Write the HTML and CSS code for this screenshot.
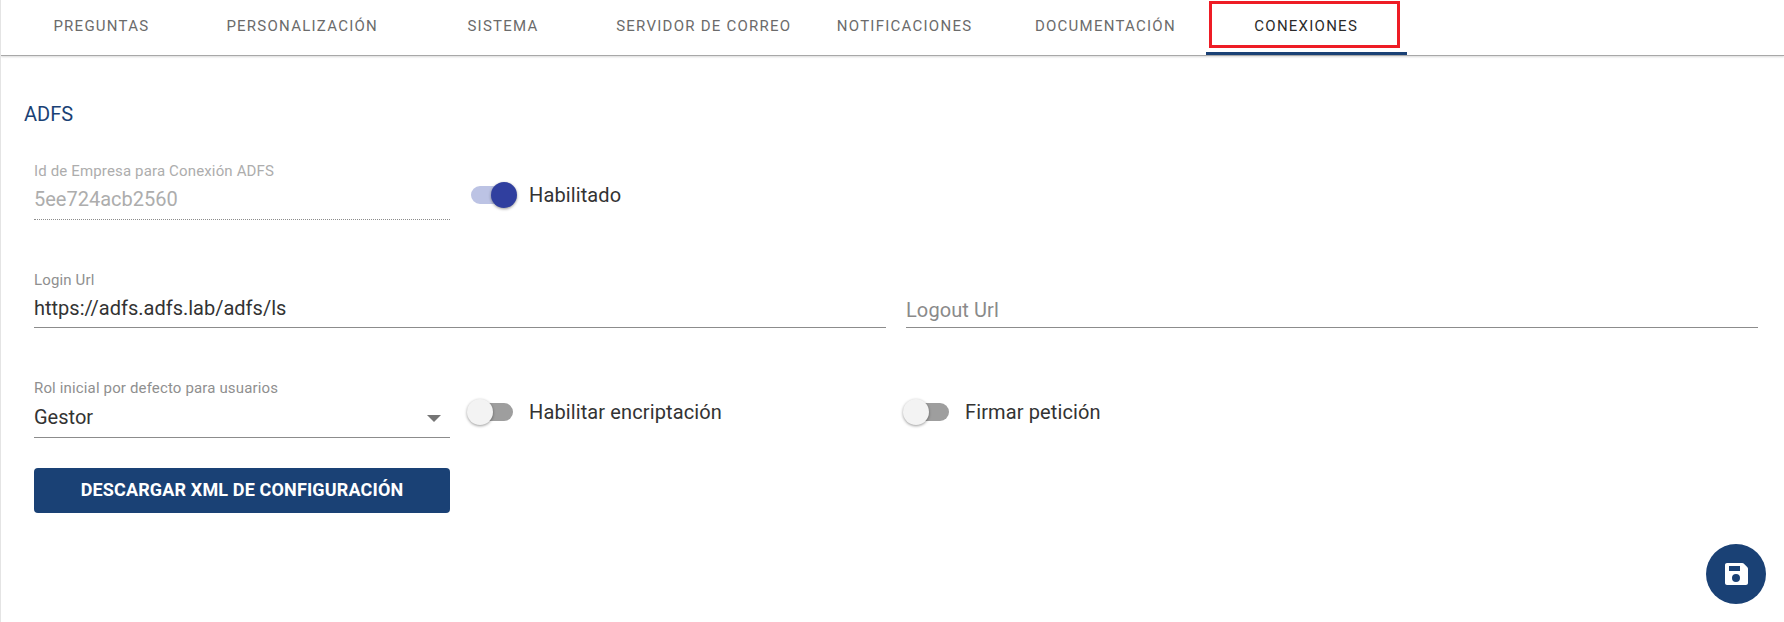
FILE: index.html
```html
<!DOCTYPE html>
<html lang="es">
<head>
    <meta charset="UTF-8">
    <title>Conexiones</title>
    <link rel="stylesheet" href="styles.css">
</head>
<body>
    <nav class="tabs">
        <div class="tab">Preguntas</div>
        <div class="tab">Personalización</div>
        <div class="tab">Sistema</div>
        <div class="tab">Servidor de correo</div>
        <div class="tab">Notificaciones</div>
        <div class="tab">Documentación</div>
        <div class="tab active">Conexiones<span class="mark"></span></div>
    </nav>
    <main class="content">
        <h2 class="title">ADFS</h2>

        <div class="row row-first">
            <div class="field small disabled">
                <label>Id de Empresa para Conexión ADFS</label>
                <div class="value">5ee724acb2560</div>
            </div>
            <div class="switch on"><span class="track"><span class="knob"></span></span>Habilitado</div>
        </div>

        <div class="row row-urls">
            <div class="field wide">
                <label>Login Url</label>
                <div class="value">https://adfs.adfs.lab/adfs/ls</div>
            </div>
            <div class="field wide empty">
                <label></label>
                <div class="value">Logout Url</div>
            </div>
        </div>

        <div class="row row-rol">
            <div class="field small select">
                <label>Rol inicial por defecto para usuarios</label>
                <div class="value">Gestor<span class="arrow"></span></div>
            </div>
            <div class="switch enc"><span class="track"><span class="knob"></span></span>Habilitar encriptación</div>
            <div class="switch"><span class="track"><span class="knob"></span></span>Firmar petición</div>
        </div>

        <button class="btn">Descargar XML de configuración</button>
    </main>
    <button class="fab" aria-label="Guardar">
        <svg width="24" height="24" viewBox="0 0 24 24"><path fill="#fff" fill-rule="evenodd" d="M3 1h15.200c.6 0 1.100.2 1.500.6l3.700 3.700c.4.4.6.9.6 1.500V21c0 1.100-.9 2-2 2H3c-1.100 0-2-.9-2-2V3c0-1.100.9-2 2-2zm2 3v5h11V4H5zm7 8a4 4 0 1 0 0 8 4 4 0 0 0 0-8z"/></svg>
    </button>
</body>
</html>
```

FILE: styles.css
```css
*{
    margin: 0;
    padding: 0;
    box-sizing: border-box;
}
html,body{
    height: 100%;
}
body{
    position: relative;
    overflow: hidden;
    background-color: #ffffff;
    border-left: 1px solid #e4e4e4;
    font-family: Roboto, "Liberation Sans", sans-serif;
    color: #333333;
}
.tabs{
    display: flex;
    height: 56px;
    border-bottom: 1px solid #a8a8a8;
    box-shadow: 0 1px 2px rgba(0,0,0,0.15);
}
.tab{
    position: relative;
    width: 200.8px;
    height: 55px;
    padding-bottom: 4px;
    display: flex;
    align-items: center;
    justify-content: center;
    font-size: 15px;
    font-weight: 400;
    letter-spacing: 1.25px;
    text-transform: uppercase;
    color: #6b6b6b;
}
.tab.active{
    color: #2b2b2b;
    border-bottom: 3px solid #1a4175;
    padding-bottom: 1px;
}
.mark{
    position: absolute;
    left: 3px;
    right: 7px;
    top: 1px;
    height: 47px;
    border: 3px solid #ee1c25;
}
.content{
    padding: 45px 26px 0 33px;
}
.title{
    margin-left: -10px;
    font-size: 20px;
    line-height: 26px;
    font-weight: 400;
    color: #1a4175;
}
.row{
    display: flex;
    gap: 20px;
}
.row-first{
    margin-top: 34px;
}
.row-urls{
    margin-top: 50px;
}
.row-rol{
    margin-top: 50px;
}
.field{
    flex: none;
    height: 59px;
    border-bottom: 1px solid #8c8c8c;
}
.field.small{
    width: 416px;
}
.field.wide{
    width: 852px;
    height: 58px;
}
.select.field{
    height: 60px;
}
.field label{
    display: block;
    height: 20px;
    font-size: 15px;
    letter-spacing: 0.15px;
    line-height: 20px;
    color: #8f8f8f;
}
.value{
    position: relative;
    margin-top: 3px;
    font-size: 20px;
    line-height: 30px;
    color: #333333;
}
.empty .value{
    margin-top: 5px;
    letter-spacing: 0.1px;
    color: #8a8a8a;
}
.select .value{
    margin-top: 4px;
}
.disabled{
    border-bottom: 1px dotted #8c8c8c;
}
.disabled label,.disabled .value{
    color: #adadad;
}
.arrow{
    position: absolute;
    right: 9px;
    top: 13px;
    border-left: 7px solid transparent;
    border-right: 7px solid transparent;
    border-top: 7px solid #757575;
}
.switch{
    display: flex;
    align-items: center;
    height: 26px;
    font-size: 20px;
    letter-spacing: 0.12px;
    line-height: 26px;
    margin-top: 21px;
    margin-left: 1px;
}
.enc{
    width: 415px;
}
.track{
    position: relative;
    flex: none;
    width: 42px;
    height: 18px;
    margin-right: 16px;
    border-radius: 9px;
    background-color: #9e9e9e;
}
.knob{
    position: absolute;
    left: -4px;
    top: -4px;
    width: 26px;
    height: 26px;
    border-radius: 50%;
    background-color: #f3f3f3;
    box-shadow: 0 1px 3px rgba(0,0,0,0.4);
}
.switch.on .track{
    background-color: #bcc3e4;
}
.switch.on .knob{
    left: 20px;
    background-color: #303f9f;
}
.btn{
    display: block;
    width: 416px;
    height: 45px;
    margin-top: 30px;
    padding-bottom: 2px;
    border: 0;
    border-radius: 4px;
    background-color: #1a4175;
    color: #ffffff;
    font-family: inherit;
    font-size: 18px;
    letter-spacing: 0.15px;
    font-weight: 700;
    text-transform: uppercase;
}
.fab{
    position: absolute;
    right: 18px;
    bottom: 18px;
    width: 60px;
    height: 60px;
    border: 0;
    border-radius: 50%;
    background-color: #1a4175;
    display: flex;
    align-items: center;
    justify-content: center;
}
```
